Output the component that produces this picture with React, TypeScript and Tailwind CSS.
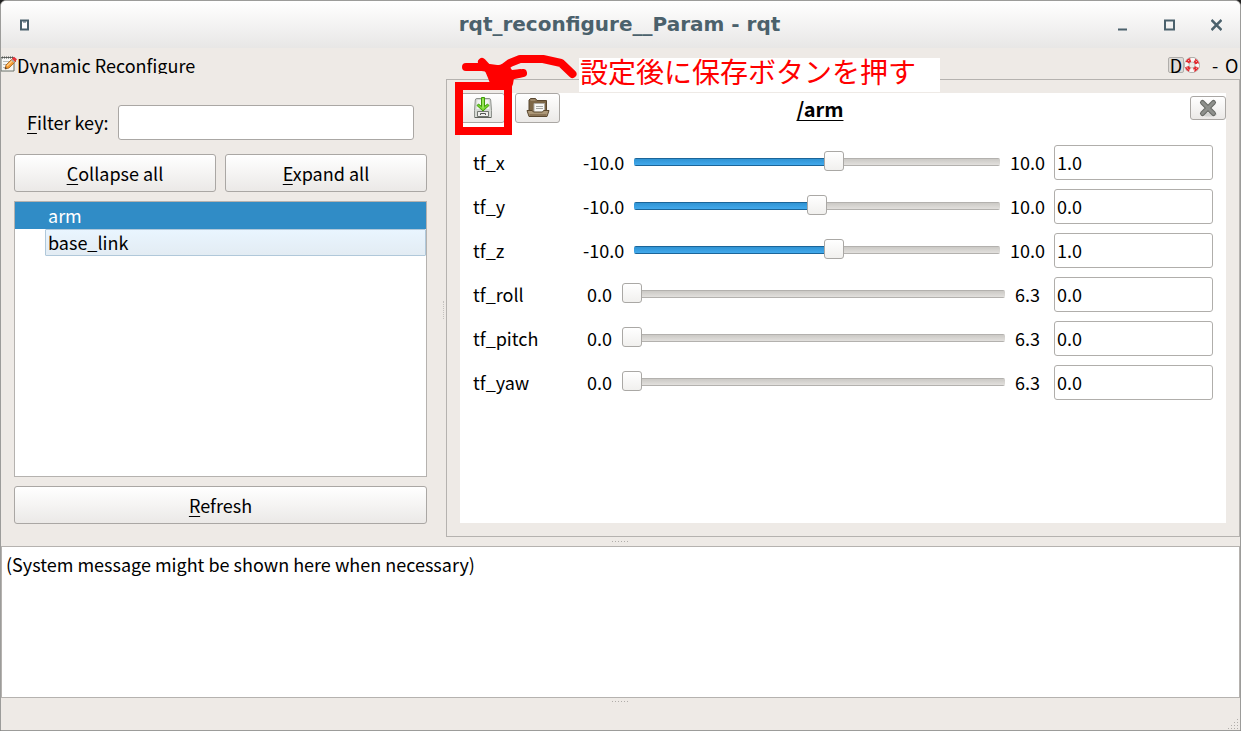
import { useState } from "react";
import type { CSSProperties, ReactNode } from "react";

type Param = { name: string; min: number; max: number; value: number };

const PARAMS: Param[] = [
  { name: "tf_x", min: -10, max: 10, value: 1 },
  { name: "tf_y", min: -10, max: 10, value: 0 },
  { name: "tf_z", min: -10, max: 10, value: 1 },
  { name: "tf_roll", min: 0, max: 6.3, value: 0 },
  { name: "tf_pitch", min: 0, max: 6.3, value: 0 },
  { name: "tf_yaw", min: 0, max: 6.3, value: 0 },
];

const BUTTON =
  "rounded-[3px] border border-[#aaa7a4] bg-linear-to-b from-white to-[#ebe9e7]";

const SLIDER =
  "mt-[7px] h-5 min-w-0 flex-1 self-start appearance-none bg-transparent " +
  "[&::-webkit-slider-runnable-track]:h-2 [&::-webkit-slider-runnable-track]:rounded-[2px] " +
  "[&::-webkit-slider-runnable-track]:bg-[image:linear-gradient(#1b6599_1px,#2f93d3_1px,#42a9ec_7px,#1b6599_7px),linear-gradient(#b3b1ae_1px,#cbc9c5_1px,#e2e0dd_7px,#b3b1ae_7px)] " +
  "[&::-webkit-slider-runnable-track]:bg-[length:var(--fill)_100%,100%_100%] [&::-webkit-slider-runnable-track]:bg-no-repeat " +
  "[&::-webkit-slider-thumb]:-mt-[7px] [&::-webkit-slider-thumb]:size-5 [&::-webkit-slider-thumb]:appearance-none " +
  "[&::-webkit-slider-thumb]:rounded-[3px] [&::-webkit-slider-thumb]:border [&::-webkit-slider-thumb]:border-[#aaa8a5] " +
  "[&::-webkit-slider-thumb]:bg-linear-to-b [&::-webkit-slider-thumb]:from-white [&::-webkit-slider-thumb]:to-[#f1f0ee]";

function Mnemonic({ children }: { children: ReactNode }) {
  return <span className="underline decoration-1 underline-offset-[3px]">{children}</span>;
}

function ParamRow({ param }: { param: Param }) {
  const [value, setValue] = useState(param.value);
  const fill = ((value - param.min) / (param.max - param.min)) * 100;
  const wide = param.min < 0;
  return (
    <div className="flex h-[35px] items-center pb-px">
      <label htmlFor={param.name} className="w-[110px] shrink-0">
        {param.name}
      </label>
      <span className={wide ? "w-[51px] shrink-0" : "w-[39px] shrink-0 pl-1"}>
        {param.min.toFixed(1)}
      </span>
      <input
        id={param.name}
        type="range"
        min={param.min}
        max={param.max}
        step={0.1}
        value={value}
        onChange={(e) => setValue(Number(e.target.value))}
        style={{ "--fill": `${fill}%` } as CSSProperties}
        className={SLIDER}
      />
      <span className={wide ? "w-[54px] shrink-0 pl-2.5" : "w-[49px] shrink-0 pl-2.5"}>
        {param.max.toFixed(1)}
      </span>
      <input
        type="text"
        aria-label={`${param.name} value`}
        value={value.toFixed(1)}
        onChange={(e) => setValue(Number(e.target.value) || 0)}
        className="h-[35px] w-[159px] shrink-0 self-start rounded-[3px] border border-[#b0aeab] bg-white px-0.5 pb-px"
      />
    </div>
  );
}

function NotepadIcon() {
  return (
    <svg width="16" height="16" viewBox="0 0 16 16" className="shrink-0">
      <path d="M0 1.5h13v13.500H0z" fill="#f7f7f5" stroke="#697068" />
      <path d="M1 1.500h11" stroke="#555" strokeWidth="2" strokeDasharray="1 1" />
      <path d="M2 5.500h8M2 8.500h5M2 11.500h3" stroke="#b9bbb8" />
      <path d="M4 13l1-4 7-7 3 3-7 7z" fill="#f59b32" stroke="#a65d15" strokeWidth=".8" />
      <path d="M6 10l7-7" stroke="#ffd08a" strokeWidth="1.200" />
      <path d="M11 3l2-2.300 3 2.500-2 2.500z" fill="#e8323c" />
      <path d="M10.500 3.500l3 3" stroke="#aaa" strokeWidth="1.500" />
      <path d="M4 13l.5-2 1.500 1.300z" fill="#333" />
    </svg>
  );
}

function LifebuoyIcon() {
  return (
    <svg width="16" height="16" viewBox="0 0 16 16">
      <circle cx="8" cy="8" r="5.300" fill="none" stroke="#9c9c98" strokeWidth="5.200" />
      <circle cx="8" cy="8" r="5.300" fill="none" stroke="#f8f6f4" strokeWidth="4" />
      <circle
        cx="8"
        cy="8"
        r="5.300"
        fill="none"
        stroke="#e2262b"
        strokeWidth="4"
        strokeDasharray="4.200 4.125"
        strokeDashoffset="-2.060"
      />
      <circle cx="8" cy="8" r="5.600" fill="none" stroke="#fff" strokeWidth="1" strokeDasharray="1.200 1.500" />
    </svg>
  );
}

function SaveIcon() {
  return (
    <svg width="22" height="22" viewBox="0 0 22 22">
      <path d="M5 1.500h12q1.500 0 1.700 1.500l.8 10.500v7h-17v-7L3.300 3Q3.500 1.500 5 1.500z" fill="#d6d9d4" stroke="#8d918c" />
      <path d="M5.500 3h11l1 9h-13z" fill="#f2f3f1" />
      <path d="M5.500 14.500h11v5h-11z" fill="#eeeeec" stroke="#70746f" />
      <path d="M8.500 18v-1.500h5v1.500" fill="none" stroke="#555" />
      <path d="M3 20.500h16" stroke="#5d615b" />
      <path
        d="M9.500.5h3v9l3-2.500 1.500 1.500-6 5.500L5 8.500 6.500 7l3 2.500z"
        fill="#73d62c"
        stroke="#3f9a08"
        strokeLinejoin="round"
      />
      <path d="M11 1.500v10" stroke="#b8f47f" />
    </svg>
  );
}

function FolderIcon() {
  return (
    <svg width="24" height="22" viewBox="0 0 24 22">
      <path d="M3 17V3l1.500-1.500h5L11 3.500h9.500V17z" fill="#7d6747" stroke="#58462f" />
      <path d="M4.500 3h5" stroke="#b9a58a" />
      <path d="M8 6.500h10.500v9.500H8z" fill="#f7f7f5" stroke="#b0aca5" />
      <path d="M10 9.500h7M10 11.500h7" stroke="#a3a5a2" />
      <path
        d="M1 13.500h5l1.500 1.500h9l1-1.500h5.500l-2 6H3z"
        fill="#ad9878"
        stroke="#5b482f"
        strokeLinejoin="round"
      />
      <path d="M3.500 18h17" stroke="#80694b" strokeWidth="1.500" />
    </svg>
  );
}

function CloseIcon() {
  return (
    <svg width="20" height="20" viewBox="0 0 20 20">
      <ellipse cx="11" cy="16.500" rx="8" ry="2" fill="#d4d4d2" />
      <path d="M4.500 4.500l11 11m0-11l-11 11" stroke="#666864" strokeWidth="5" strokeLinecap="round" />
      <path d="M4.500 4.500l11 11m0-11l-11 11" stroke="#8e908c" strokeWidth="3" strokeLinecap="round" />
    </svg>
  );
}

function Annotation() {
  return (
    <div className="pointer-events-none absolute -top-[35px] -left-[5px] flex items-start">
      <svg width="124" height="77" viewBox="455 58 124 77" className="overflow-visible">
        <rect x="459" y="86" width="49" height="45" fill="none" stroke="#f00" strokeWidth="8" />
        <g fill="none" stroke="#f00" strokeWidth="8" strokeLinecap="round" strokeLinejoin="round">
          <path d="M466 67h16l22 3" />
          <path d="M482 62l9 10 6 12" />
          <path d="M523 73l-14 3" />
          <path d="M572.500 74l-11.500-11-18-4h-23l-10 4-8 6" />
        </g>
        <path
          d="M483 66l16-1 8-2 5 7 9-1 1 8-8 1-1 6-2 5-8 1-12-4-3-8z"
          fill="#f00"
        />
      </svg>
      <p className="h-[34px] w-[361px] bg-white pl-px text-[28px] leading-[26px] whitespace-nowrap text-[#f00]">
        設定後に保存ボタンを押す
      </p>
    </div>
  );
}

function TitleBar() {
  return (
    <header className="flex h-[47px] shrink-0 items-center justify-between bg-linear-to-b from-white to-[#e8e7e6] px-[18px] text-[#4b616c]">
      <button type="button" aria-label="Window menu" className="w-[103px]">
        <svg width="11" height="12" viewBox="0 0 11 12">
          <path d="M2 1.500h7v9H2z" fill="#fff" stroke="currentColor" strokeWidth="2" />
          <path d="M4 3h3" stroke="currentColor" />
        </svg>
      </button>
      <h1 className="pb-0.5 font-[family-name:'DejaVu_Sans',sans-serif] text-[20px] font-bold">
        rqt_reconfigure__Param - rqt
      </h1>
      <div className="flex items-center gap-9">
        <button type="button" aria-label="Minimize">
          <svg width="11" height="12" viewBox="0 0 11 12">
            <path d="M1 10.500h9" stroke="currentColor" strokeWidth="2" />
          </svg>
        </button>
        <button type="button" aria-label="Maximize">
          <svg width="11" height="12" viewBox="0 0 11 12">
            <path d="M1 1.500h9v9H1z" fill="none" stroke="currentColor" strokeWidth="2" />
          </svg>
        </button>
        <button type="button" aria-label="Close window">
          <svg width="11" height="12" viewBox="0 0 11 12">
            <path d="M.5 1l10 10m0-10l-10 10" stroke="currentColor" strokeWidth="2.500" />
          </svg>
        </button>
      </div>
    </header>
  );
}

function DockTitle() {
  return (
    <div className="flex h-[26px] shrink-0 items-start justify-between overflow-hidden">
      <div className="flex pt-2">
        <NotepadIcon />
        <h2 className="leading-[18px]">Dynamic Reconfigure</h2>
      </div>
      <div className="flex pt-[9px] leading-[17px]">
        <button
          type="button"
          aria-label="Dock settings"
          className="flex h-4 w-4 items-center justify-center rounded-[2px] border border-[#b0aeab] bg-[#dedbd8]"
        >
          D
        </button>
        <button type="button" aria-label="Help" className="h-4 w-4">
          <LifebuoyIcon />
        </button>
        <button type="button" aria-label="Minimize dock" className="ml-3 w-[13px] text-left">
          -
        </button>
        <button type="button" aria-label="Float dock" className="w-[15px] text-left">
          O
        </button>
      </div>
    </div>
  );
}

function NodePanel() {
  return (
    <section className="flex w-[445px] shrink-0 items-stretch">
      <div className="flex flex-1 flex-col gap-[9px] pt-[31px] pb-[22px] pl-[13px]">
        <div className="mb-[5px] flex h-[35px] items-center gap-[9px] px-[13px]">
          <label htmlFor="filter" className="shrink-0 pb-px">
            <Mnemonic>F</Mnemonic>ilter key:
          </label>
          <input
            id="filter"
            type="text"
            className="h-[35px] min-w-0 flex-1 rounded-[3px] border border-[#aaa7a4] bg-white px-1"
          />
        </div>
        <div className="grid h-[38px] grid-cols-2 gap-[9px]">
          <button type="button" className={BUTTON}>
            <Mnemonic>C</Mnemonic>ollapse all
          </button>
          <button type="button" className={BUTTON}>
            <Mnemonic>E</Mnemonic>xpand all
          </button>
        </div>
        <ul className="flex-1 border border-[#b5b2af] bg-white">
          <li className="h-[27px] bg-[#308cc6] pl-[33px] leading-[27px] text-white">arm</li>
          <li className="ml-[30px] h-[27px] rounded-[1px] border border-[#b0c8da] bg-linear-to-b from-[#e9f5ff] to-[#e3ecf3] pl-0.5 leading-[25px]">
            base_link
          </li>
        </ul>
        <button type="button" className={`h-[38px] ${BUTTON}`}>
          <Mnemonic>R</Mnemonic>efresh
        </button>
      </div>
      <div className="flex w-[19px] items-center justify-end pr-px">
        <div className="h-[18px] w-0.5 border-l border-dotted border-[#c4c1be]" />
      </div>
    </section>
  );
}

function ParamPanel() {
  return (
    <section className="mt-[5px] mb-[9px] flex min-w-0 flex-1 border border-[#b5b2af] p-[13px]">
      <div className="relative flex-1 bg-white">
        <div className="flex h-[30px] items-center">
          <div className="flex gap-2.5">
            <button
              type="button"
              aria-label="Save parameters"
              className={`flex h-[30px] w-[45px] items-center justify-center ${BUTTON}`}
            >
              <SaveIcon />
            </button>
            <button
              type="button"
              aria-label="Load parameters"
              className={`flex h-[30px] w-[45px] items-center justify-center ${BUTTON}`}
            >
              <FolderIcon />
            </button>
          </div>
          <h3 className="flex-1 pt-0.5 pr-[110px] text-center text-[20px] font-bold underline decoration-1 underline-offset-[3px]">
            /arm
          </h3>
          <button
            type="button"
            aria-label="Close node"
            className={`flex h-6 w-9 items-center justify-center ${BUTTON}`}
          >
            <CloseIcon />
          </button>
        </div>
        <div className="mt-[22px] flex flex-col gap-[9px] px-[13px]">
          {PARAMS.map((p) => (
            <ParamRow key={p.name} param={p} />
          ))}
        </div>
        <Annotation />
      </div>
    </section>
  );
}

function DotHandle() {
  return (
    <svg width="17" height="3" viewBox="0 0 17 3" className="mx-auto">
      {[0, 3, 6, 9, 12, 15].map((x) => (
        <rect key={x} x={x} y="1" width="1" height="1" fill="#b0adaa" />
      ))}
    </svg>
  );
}

function SizeGrip() {
  const dots = [
    [9, 0], [6, 3], [9, 3], [3, 6], [6, 6], [9, 6], [0, 9], [3, 9], [6, 9], [9, 9],
  ];
  return (
    <svg width="10" height="10" viewBox="0 0 10 10">
      {dots.map(([x, y]) => (
        <rect key={`${x}-${y}`} x={x} y={y} width="1" height="1" fill="#b0adaa" />
      ))}
    </svg>
  );
}

export default function App() {
  return (
    <div className="flex min-h-screen flex-col bg-[#222] font-['Noto_Sans_CJK_JP','Noto_Sans',sans-serif] text-[18px] leading-[24px] text-black">
      <div className="flex flex-1 flex-col overflow-hidden rounded-t-[6px] border border-[#9c9c9a] bg-[#eeeae6]">
        <TitleBar />
        <DockTitle />
        <main className="relative flex flex-1">
          <NodePanel />
          <ParamPanel />
          <div className="absolute inset-x-0 bottom-[3px] flex">
            <DotHandle />
          </div>
        </main>
        <section className="h-[152px] shrink-0 border border-[#b5b2af] bg-white px-1 pt-[5px]">
          (System message might be shown here when necessary)
        </section>
        <footer className="flex h-8 shrink-0 items-end justify-between p-0.5 pb-px">
          <span className="w-2.5" />
          <div className="self-start">
            <DotHandle />
          </div>
          <SizeGrip />
        </footer>
      </div>
    </div>
  );
}
